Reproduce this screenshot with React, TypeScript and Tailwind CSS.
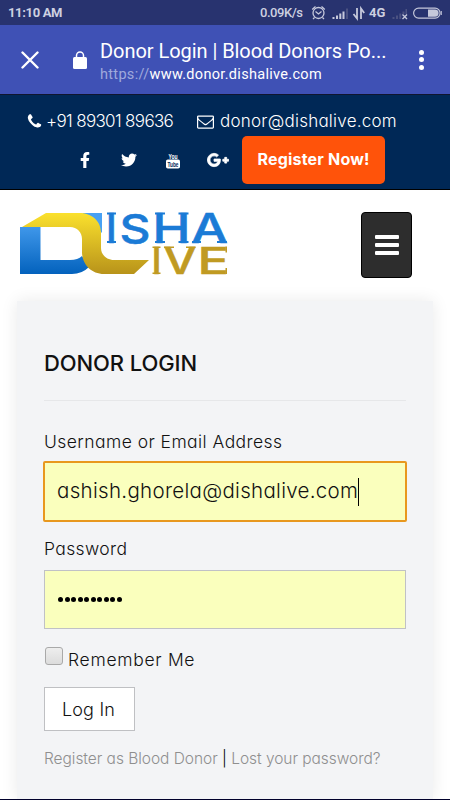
import { FaFacebookF, FaTwitter, FaGooglePlusG } from "react-icons/fa";

const StatusIcons = () => (
  <svg width="131" height="20" viewBox="0 0 131 20" fill="none" className="text-[#c5c8db]">
    {/* Alarm clock */}
    <g stroke="currentColor" strokeWidth="1.3">
      <circle cx="7.500" cy="10" r="5.500" />
      <path d="M4.500 8.500l3 2.500 3-2.500M1.200 6.500l3.300-3M13.800 6.500l-3.300-3M3.500 14.500L2 16M11.500 14.500L13 16" />
    </g>
    {/* Signal, first sim */}
    <path
      d="M21.5 14h2v2h-2zM25 12.5h2V16h-2zM28.3 10.5h2V16h-2zM31.5 8.5h2V16h-2z"
      fill="currentColor"
    />
    <path d="M35 5.5h2V16h-2z" fill="#4b5282" />
    {/* Data arrows */}
    <path d="M46 5V15.500L42.5 11M50 16V5.500l3.2 4.500" stroke="currentColor" strokeWidth="1.8" />
    {/* Signal, second sim */}
    <path
      d="M81.5 14h2v2h-2zM85 12.5h2V16h-2zM88.3 10.5h2V16h-2zM91.5 8.5h2V11h-2zM94.5 6h1.5v5h-1.5z"
      fill="#4b5282"
    />
    <path d="M91.500 11.500l4.500 4.500M96 11.500L91.500 16" stroke="currentColor" strokeWidth="1.4" />
    {/* Battery */}
    <rect x="102.600" y="5.100" width="26.500" height="10" rx="5" stroke="currentColor" strokeWidth="1.200" />
    <path d="M117 6.500h7a3.600 3.600 0 010 7.200h-7z" fill="currentColor" />
    <path d="M130.300 8v4" stroke="currentColor" />
  </svg>
);

const PhoneIcon = () => (
  <svg width="17" height="17" viewBox="0 0 1792 1792" fill="currentColor" className="shrink-0">
    <path d="M1600 1240q0 27-10 70.500t-21 68.500q-21 50-122 106-94 51-186 51-27 0-53-3.500t-57.500-12.500-47-14.500-55.500-20.500-49-18q-98-35-175-83-127-79-264-216t-216-264q-48-77-83-175-3-9-18-49t-20.500-55.500-14.500-47-12.500-57.500-3.500-53q0-92 51-186 56-101 106-122 25-11 68.500-21t70.500-10q14 0 21 3 18 6 53 76 11 19 30 54t35 63.500 31 53.500q3 4 17.500 25t21.500 35.500 7 28.500q0 20-28.500 50t-62 55-62 53-28.500 46q0 9 5 22.500t8.500 20.500 14 24 11.500 19q76 137 174 235t235 174q2 1 19 11.500t24 14 20.500 8.500 22.500 5q18 0 46-28.500t53-62 55-62 50-28.500q14 0 28.500 7t35.500 21.500 25 17.500q25 15 53.500 31t63.500 35 54 30q70 35 76 53 3 7 3 21z" />
  </svg>
);

const EnvelopeIcon = () => (
  <svg width="17" height="17" viewBox="0 0 1792 1792" fill="currentColor" className="shrink-0">
    <path d="M1664 1504v-768q-32 36-69 66-268 206-426 338-51 43-83 67t-86.500 48.500-102.500 24.500h-2q-48 0-102.500-24.500t-86.500-48.500-83-67q-158-132-426-338-37-30-69-66v768q0 13 9.500 22.500t22.500 9.500h1472q13 0 22.500-9.500t9.500-22.500zm0-1051v-24.500l-.5-13-3-12.500-5.500-9-9-7.500-14-2.500h-1472q-13 0-22.500 9.500t-9.500 22.500q0 168 147 284 193 152 401 317 6 5 35 29.500t46 37.500 44.500 31.500 50.500 27.500 43 9h2q20 0 43-9t50.500-27.500 44.500-31.500 46-37.500 35-29.500q208-165 401-317 54-43 100.500-115.500t46.500-131.500zm128-37v1088q0 66-47 113t-113 47h-1472q-66 0-113-47t-47-113v-1088q0-66 47-113t113-47h1472q66 0 113 47t47 113z" />
  </svg>
);

const YoutubeIcon = () => (
  <svg
    width="14"
    height="17"
    viewBox="0 0 14 17"
    className="overflow-visible font-['Liberation_Sans',sans-serif] font-bold"
  >
    <text x="2.500" y="6.500" fontSize="8" textLength="9" lengthAdjust="spacingAndGlyphs" fill="#fff">
      You
    </text>
    <rect y="7.500" width="14" height="9" rx="1.800" fill="#fff" />
    <text x="1.500" y="15" fontSize="8" textLength="11" lengthAdjust="spacingAndGlyphs" fill="#002856">
      Tube
    </text>
  </svg>
);

const Logo = () => (
  <svg width="210" height="66" viewBox="19 211 210 66" className="overflow-visible font-['Inter',sans-serif]">
    <defs>
      <linearGradient id="blue" x1="0" y1="0" x2="0" y2="1">
        <stop offset="0" stopColor="#3f97ea" />
        <stop offset="1" stopColor="#0362bd" />
      </linearGradient>
      <linearGradient id="gold" x1="0" y1="0" x2="0" y2="1">
        <stop offset="0" stopColor="#fbe12d" />
        <stop offset="1" stopColor="#b8931a" />
      </linearGradient>
    </defs>
    <path d="M82 213h20v20z" fill="#48a0f3" />
    <path d="M20 227h20.500v33H70q8 0 12-4l7 11q-7 7-17 7H20z" fill="url(#blue)" />
    <path
      d="M22 227l24-14h33c13 0 22 8 22 20v15c0 7 6 12 13 12h35l-15 14h-30c-13 0-22-10-22-22v-13c0-7-5-12-12-12z"
      fill="url(#gold)"
    />
    <g fill="#1b7bd6" fontSize="41" fontWeight="500" stroke="#1b7bd6" strokeWidth=".5">
      <text x="105.800" y="242.500">I</text>
      <text x="119.500" y="242.500" fontSize="40" textLength="31" lengthAdjust="spacingAndGlyphs">S</text>
      <text x="152.500" y="242.500" textLength="38" lengthAdjust="spacingAndGlyphs">H</text>
      <text x="191" y="242.500" textLength="37" lengthAdjust="spacingAndGlyphs">A</text>
      <path
        stroke="none"
        d="M107 212.500h9v2h-9zM107 241h9v2h-9zM155 212.500h10v2h-10zM155 241h10v2h-10zM178.500 212.500h10v2h-10zM178.500 241h10v2h-10zM192 241h9v2h-9zM217 241h10v2h-10z"
      />
    </g>
    <g fill="#c09a22" fontSize="37" fontWeight="500" stroke="#c09a22" strokeWidth=".5">
      <text x="151.500" y="273.700">I</text>
      <text x="163.500" y="273.700" textLength="33" lengthAdjust="spacingAndGlyphs">V</text>
      <text x="197.500" y="273.700" textLength="31.500" lengthAdjust="spacingAndGlyphs">E</text>
      <path
        stroke="none"
        d="M152.500 246.500h8v1.500h-8zM152.500 272.500h8v1.500h-8zM164 246.500h10v1.500h-10zM186 246.500h9.500v1.500H186zM225.500 246.500h1.500v6h-1.500zM225.500 268h1.500v6h-1.500z"
      />
    </g>
  </svg>
);

const StatusBar = () => (
  <div className="flex h-[25px] shrink-0 items-center bg-[#28336f] pl-2 font-['Roboto',sans-serif] text-[13px] font-bold text-[#cdd0e0]">
    <span className="w-[252px] tracking-[-0.35px]">11:10 AM</span>
    <span className="w-[51px] font-medium tracking-[-0.45px]">0.09K/s</span>
    <div className="relative flex">
      <StatusIcons />
      <span className="absolute top-0 left-[58px] text-[13px] leading-5">4G</span>
    </div>
  </div>
);

const BrowserBar = () => (
  <div className="flex h-[70px] shrink-0 items-center border-b border-[#10162f] bg-[#3f51b5] font-['Roboto',sans-serif] text-white">
    <svg width="18" height="18" viewBox="0 0 18 18" className="ml-[21px]">
      <path d="M1.500 1.500l15 15M16.500 1.500l-15 15" stroke="#fff" strokeWidth="2.400" strokeLinecap="round" />
    </svg>
    <svg width="14" height="18" viewBox="0 0 14 18" className="ml-[34px]">
      <rect y="6" width="14" height="12" rx="1.500" fill="#fff" />
      <path d="M3.500 7V4.500a3.500 3.500 0 017 0V7" fill="none" stroke="#fff" strokeWidth="1.500" />
    </svg>
    <div className="mt-[3px] ml-[13px] w-[310px] whitespace-nowrap">
      <h1 className="text-[20px] leading-[26px] tracking-[-0.05px]">Donor Login | Blood Donors Po...</h1>
      <p className="text-[14.500px] leading-[21px] tracking-[0.31px]">
        <span className="text-[#a0a9dc]">https://</span>www.donor.dishalive.com
      </p>
    </div>
    <div className="ml-[9px] flex flex-col gap-[2.500px]">
      <i className="size-[5px] rounded-full bg-white" />
      <i className="size-[5px] rounded-full bg-white" />
      <i className="size-[5px] rounded-full bg-white" />
    </div>
  </div>
);

const ContactBar = () => (
  <div className="h-[95px] shrink-0 border-b border-black bg-[#002856] text-white">
    <div className="flex h-[41px] items-end text-[17px] leading-[30px] font-light whitespace-nowrap">
      <a className="flex w-[170px] items-center pl-[26px]">
        <PhoneIcon />
        <span className="ml-[3px] tracking-[-0.660px]">+91 89301 89636</span>
      </a>
      <a className="flex items-center pl-[27px]">
        <EnvelopeIcon />
        <span className="ml-1.5 tracking-[0.240px]">donor@dishalive.com</span>
      </a>
    </div>
    <div className="flex h-12 items-center">
      <FaFacebookF className="ml-[77px] size-4" />
      <FaTwitter className="ml-7 size-4" />
      <div className="ml-[29px]">
        <YoutubeIcon />
      </div>
      <FaGooglePlusG className="ml-[27px] size-[22px] stroke-white stroke-[24]" />
      <button className="ml-[13px] h-12 w-[143px] rounded-[5px] bg-[#ff530a] pb-0.5 text-[16px] font-bold tracking-[0.200px]">
        Register Now!
      </button>
    </div>
  </div>
);

const Header = () => (
  <header className="flex h-[111px] shrink-0 justify-between bg-white pt-[21px] pr-[38px] pl-[19px]">
    <Logo />
    <button className="mt-[1px] flex h-[66px] w-[51px] flex-col items-center justify-center gap-1 rounded-[4px] border border-black bg-[#2d2d2d]">
      <i className="h-1 w-6 rounded-[1px] bg-white" />
      <i className="h-1 w-6 rounded-[1px] bg-white" />
      <i className="h-1 w-6 rounded-[1px] bg-white" />
    </button>
  </header>
);

const LoginForm = () => (
  <section className="mx-[17px] flex-1 bg-[#f3f4f6] px-[27px] whitespace-nowrap text-[#111] shadow-[0_0_16px_rgba(0,0,0,0.09)]">
    <h2 className="flex h-[100px] items-center border-b border-[#e6e7e9] pt-[25px] text-[22px] font-medium tracking-[-0.100px]">
      DONOR LOGIN
    </h2>
    <label className="mt-[27px] block text-[17.500px] leading-[27px] font-[350] tracking-[0.440px]">
      Username or Email Address
    </label>
    <div className="-mx-px mt-[6px] flex h-[61px] items-center rounded-[2px] border-2 border-[#e8981e] bg-[#faffbd] pl-3 text-[20.500px] font-light">
      <span className="tracking-[0.310px]">ashish.ghorela@dishalive.com</span>
      <i className="h-7 w-px bg-black" />
    </div>
    <label className="mt-[14px] block text-[17.500px] leading-[26px] font-[350] tracking-[0.380px]">Password</label>
    <div className="mt-2 flex h-[59px] items-center gap-[1.500px] border border-[#c0c1c6] bg-[#faffbd] pl-[13px]">
      {Array.from({ length: 10 }, (_, i) => (
        <i key={i} className="size-[5px] rounded-full bg-black" />
      ))}
    </div>
    <label className="mt-[18px] flex h-[26px] text-[17.500px] leading-[26px] font-[350] tracking-[0.700px]">
      <i className="mr-[5px] ml-px size-[18px] rounded-[3px] border border-[#a9a9a9] bg-linear-to-b from-[#eeeeee] to-[#dcdcdc]" />
      <span>Remember Me</span>
    </label>
    <button className="mt-[14px] block h-11 w-[91px] border border-[#bfc0c3] bg-white pr-0.5 text-[18px] font-light tracking-[0.2px]">
      Log In
    </button>
    <p className="mt-[15px] text-[15.500px] leading-[26px] font-light tracking-[-0.04px] text-[#8f8f8f]">
      <a>Register as Blood Donor</a> <span className="text-black">|</span> <a>Lost your password?</a>
    </p>
  </section>
);

export default function App() {
  return (
    <div className="flex h-[800px] w-[450px] flex-col overflow-hidden border-b border-[#00002b] bg-white font-['Inter','Open_Sans',sans-serif] [font-feature-settings:'cv11']">
      <StatusBar />
      <BrowserBar />
      <ContactBar />
      <Header />
      <LoginForm />
    </div>
  );
}
